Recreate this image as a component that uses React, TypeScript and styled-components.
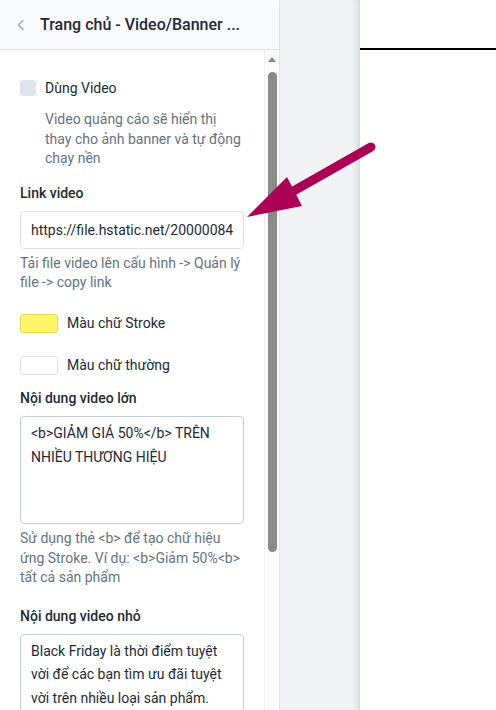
import React from 'react'
import styled, { createGlobalStyle } from 'styled-components'

const GlobalStyle = createGlobalStyle`
  html, body {
    margin: 0;
    padding: 0;
    height: 100%;
    overflow: hidden;
  }
  body {
    font-family: Roboto, "Noto Sans", sans-serif;
    font-size: 14px;
    color: #212b36;
  }
  #root {
    height: 100%;
  }
`

const Page = styled.div`
  position: relative;
  display: flex;
  height: 710px;
  width: 496px;
  background: #f2f3f5;
`

const Sidebar = styled.aside`
  width: 279px;
  flex-shrink: 0;
  display: flex;
  flex-direction: column;
  background: #fff;
  border-right: 1px solid #e3e6ea;
`

const Header = styled.div`
  height: 49px;
  flex-shrink: 0;
  display: flex;
  align-items: center;
  gap: 12px;
  padding: 0 0 0 14px;
  background: #f9fafb;
  border-bottom: 1px solid #e1e4e8;
  box-shadow: 0 1px 2px rgba(0, 0, 0, 0.04);
`

const BackIcon = styled.svg`
  width: 14px;
  height: 14px;
  color: #a3abb6;
`

const Title = styled.div`
  font-size: 16px;
  font-weight: 500;
  color: #212b36;
`

const ScrollArea = styled.div`
  flex: 1;
  min-height: 0;
  display: flex;
  background: #fff;
`

const Body = styled.div`
  flex: 1;
  min-width: 0;
  overflow: hidden;
  padding: 30px 20px 0 20px;
`

const ScrollTrack = styled.div`
  width: 15px;
  flex-shrink: 0;
  display: flex;
  flex-direction: column;
  align-items: center;
  background: #fafafa;
  border-left: 1px solid #f0f0f0;
  box-sizing: border-box;
`

const ScrollUp = styled.div`
  margin-top: 7px;
  width: 0;
  height: 0;
  border-left: 4px solid transparent;
  border-right: 4px solid transparent;
  border-bottom: 5px solid #8a8a8a;
`

const ScrollThumb = styled.div`
  margin-top: 10px;
  width: 9px;
  height: 480px;
  border-radius: 5px;
  background: #8a8a8a;
`

const CheckRow = styled.label`
  display: flex;
  align-items: center;
  gap: 9px;
  line-height: 16px;
`

const CheckBox = styled.span`
  width: 16px;
  height: 16px;
  border-radius: 3px;
  background: #dfe3ec;
`

const Hint = styled.div<{ $indent?: boolean; $top?: number }>`
  color: #637381;
  line-height: 19.6px;
  margin-top: ${({ $top }) => $top ?? 0}px;
  padding-left: ${({ $indent }) => ($indent ? 25 : 0)}px;
`

const Label = styled.div<{ $top: number }>`
  font-weight: 500;
  line-height: 20px;
  margin-top: ${({ $top }) => $top}px;
  margin-bottom: 8px;
`

const Input = styled.div`
  height: 36px;
  border: 1px solid #dfe3e8;
  border-radius: 4px;
  padding: 0 10px;
  display: flex;
  align-items: center;
  white-space: nowrap;
  overflow: hidden;
`

const Textarea = styled.div<{ $height: number }>`
  height: ${({ $height }) => $height}px;
  border: 1px solid #c4cdd5;
  border-radius: 4px;
  padding: 5px 10px;
  line-height: 23.6px;
  box-sizing: border-box;
  overflow: hidden;
`

const ColorRow = styled.div<{ $top: number }>`
  display: flex;
  align-items: center;
  gap: 9px;
  margin-top: ${({ $top }) => $top}px;
`

const Swatch = styled.span<{ $color: string }>`
  width: 36px;
  height: 17px;
  border-radius: 3px;
  border: 1px solid ${({ $color }) => ($color === '#ffffff' ? '#dfe3e8' : '#e8d84c')};
  background: ${({ $color }) => $color};
`

const Gutter = styled.div`
  width: 80px;
  flex-shrink: 0;
  box-shadow: inset -6px 0 6px -4px rgba(0, 0, 0, 0.14);
`

const Preview = styled.div`
  flex: 1;
  background: #fff;
`

const PreviewBar = styled.div`
  height: 48px;
  border-bottom: 2px solid #000;
`

const Arrow = styled.svg`
  position: absolute;
  left: 0;
  top: 0;
  pointer-events: none;
`

export default function App() {
  return (
    <>
      <GlobalStyle />
      <Page>
        <Sidebar>
          <Header>
            <BackIcon viewBox="0 0 14 14" fill="none">
              <path d="M9 2.5 4.5 7 9 11.5" stroke="currentColor" strokeWidth="1.6" strokeLinecap="round" strokeLinejoin="round" />
            </BackIcon>
            <Title>Trang chủ - Video/Banner ...</Title>
          </Header>
          <ScrollArea>
            <Body>
              <CheckRow>
                <CheckBox />
                <span>Dùng Video</span>
              </CheckRow>
              <Hint $indent $top={14}>
                Video quảng cáo sẽ hiển thị thay cho ảnh banner và tự động chạy nền
              </Hint>
              <Label $top={14}>Link video</Label>
              <Input>https://file.hstatic.net/20000084</Input>
              <Hint $top={5}>Tải file video lên cấu hình -&gt; Quản lý file -&gt; copy link</Hint>
              <ColorRow $top={21}>
                <Swatch $color="#fff566" />
                <span>Màu chữ Stroke</span>
              </ColorRow>
              <ColorRow $top={23}>
                <Swatch $color="#ffffff" />
                <span>Màu chữ thường</span>
              </ColorRow>
              <Label $top={13}>Nội dung video lớn</Label>
              <Textarea $height={108}>
                &lt;b&gt;GIẢM GIÁ 50%&lt;/b&gt; TRÊN NHIỀU THƯƠNG HIỆU
              </Textarea>
              <Hint $top={5}>
                Sử dụng thẻ &lt;b&gt; để tạo chữ hiệu ứng Stroke. Ví dụ: &lt;b&gt;Giảm 50%&lt;b&gt; tất cả sản phẩm
              </Hint>
              <Label $top={18}>Nội dung video nhỏ</Label>
              <Textarea $height={108}>
                Black Friday là thời điểm tuyệt vời để các bạn tìm ưu đãi tuyệt vời trên nhiều loại sản phẩm.
              </Textarea>
            </Body>
            <ScrollTrack>
              <ScrollUp />
              <ScrollThumb />
            </ScrollTrack>
          </ScrollArea>
        </Sidebar>
        <Gutter />
        <Preview>
          <PreviewBar />
        </Preview>
        <Arrow width="496" height="710" viewBox="0 0 496 710">
          <line x1="371" y1="147" x2="290" y2="193" stroke="#ab0055" strokeWidth="9" strokeLinecap="round" />
          <polygon points="247,217 287,177 302,206" fill="#ab0055" />
        </Arrow>
      </Page>
    </>
  )
}
